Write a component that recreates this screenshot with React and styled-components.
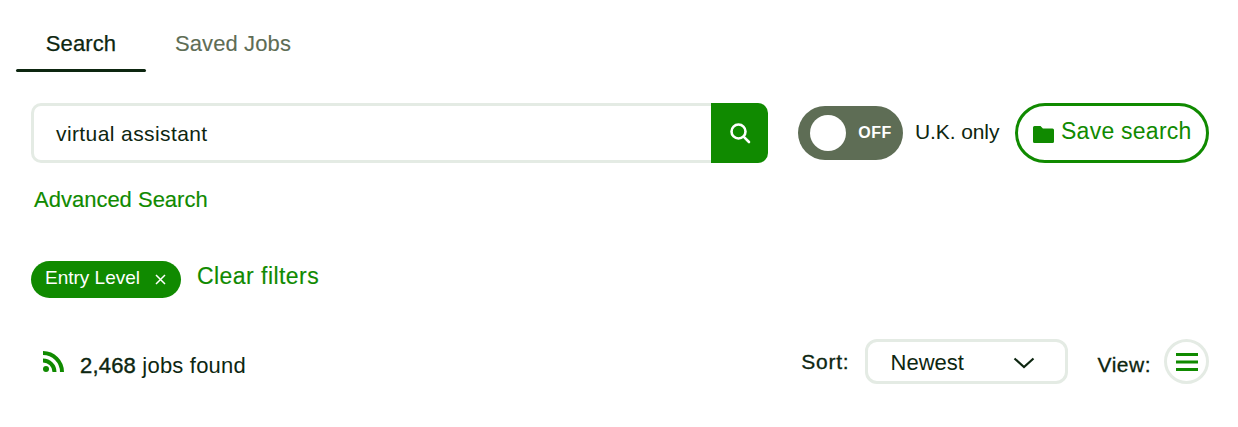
import React from 'react'
import styled, { createGlobalStyle } from 'styled-components'

const GREEN = '#108a00'
const DARK = '#0d2610'
const GREY = '#5e6d55'
const LINE = '#e4ebe4'

const Global = createGlobalStyle`
  html, body { margin: 0; padding: 0; background: #fff; }
  body { font-family: 'Liberation Sans', Arial, sans-serif; color: ${DARK}; }
  * { box-sizing: border-box; }
`

const Page = styled.div`
  width: 1238px;
  height: 427px;
  padding: 16px 29px 0 16px;
  overflow: hidden;
`

const Tabs = styled.div`
  display: flex;
  height: 56px;
`

const Tab = styled.div`
  position: relative;
  width: ${({ wide }) => (wide ? '174px' : '130px')};
  display: flex;
  justify-content: center;
  padding-top: 16px;
  font-size: 22px;
  line-height: 24px;
  letter-spacing: 0.1px;
  color: ${({ active }) => (active ? DARK : GREY)};
  -webkit-text-stroke: ${({ active }) => (active ? '0.25px' : '0.1px')};

  &::after {
    content: '';
    display: ${({ active }) => (active ? 'block' : 'none')};
    position: absolute;
    left: 0;
    right: 0;
    bottom: 0;
    height: 3px;
    border-radius: 2px;
    background: ${DARK};
  }
`

const SearchRow = styled.div`
  display: flex;
  align-items: flex-start;
  margin: 31px 0 0 15px;

  > * {
    flex: none;
    white-space: nowrap;
  }
`

const SearchBox = styled.div`
  display: flex;
  width: 737px;
  height: 60px;
`

const Field = styled.div`
  flex: 1;
  display: flex;
  align-items: center;
  padding: 1px 0 0 22px;
  border: 3px solid ${LINE};
  border-right: 0;
  border-radius: 10px 0 0 10px;
  font-size: 21px;
  letter-spacing: 0.4px;
`

const SearchButton = styled.div`
  width: 57px;
  display: flex;
  align-items: center;
  justify-content: center;
  background: ${GREEN};
  border-radius: 0 10px 10px 0;
`

const Toggle = styled.div`
  width: 105px;
  height: 54px;
  margin: 3px 0 0 30px;
  padding: 0 11px 0 12px;
  display: flex;
  align-items: center;
  justify-content: space-between;
  background: ${GREY};
  border-radius: 27px;
`

const Knob = styled.span`
  width: 36px;
  height: 36px;
  border-radius: 50%;
  background: #fff;
`

const ToggleText = styled.span`
  color: #fff;
  font-size: 16px;
  font-weight: 700;
  letter-spacing: 0.6px;
`

const ToggleLabel = styled.span`
  margin: 15px 0 0 12px;
  font-size: 21px;
  line-height: 28px;
  letter-spacing: -0.1px;
`

const SaveButton = styled.div`
  width: 194px;
  height: 60px;
  margin-left: 16px;
  padding-bottom: 3px;
  display: flex;
  align-items: center;
  justify-content: center;
  gap: 7px;
  border: 3px solid ${GREEN};
  border-radius: 30px;
  color: ${GREEN};
  font-size: 23px;
  letter-spacing: 0.25px;

  svg {
    margin-top: 5px;
  }
`

const Link = styled.a`
  color: ${GREEN};
  font-size: ${({ size }) => size}px;
  line-height: 26px;
  letter-spacing: ${({ spacing }) => spacing}px;
  -webkit-text-stroke: 0.15px;
`

const AdvancedRow = styled.div`
  margin: 24px 0 0 18px;
`

const FilterRow = styled.div`
  display: flex;
  align-items: flex-start;
  gap: 16px;
  margin: 48px 0 0 15px;
`

const ClearSlot = styled.div`
  margin-top: 2px;
`

const Chip = styled.div`
  width: 150px;
  height: 37px;
  padding: 0 15px 3px 14px;
  display: flex;
  align-items: center;
  justify-content: space-between;
  background: ${GREEN};
  border-radius: 19px;
  color: #fff;
  font-size: 19px;

  svg {
    margin-top: 3px;
  }
`

const ResultRow = styled.div`
  display: flex;
  align-items: center;
  justify-content: space-between;
  margin: 41px 0 0 27px;
  height: 45px;
`

const Found = styled.div`
  display: flex;
  align-items: center;
  gap: 16px;
  font-size: 22px;
  letter-spacing: 0.2px;
`

const FoundText = styled.span`
  padding-top: 9px;
`

const Count = styled.span`
  -webkit-text-stroke: 0.4px;
`

const Controls = styled.div`
  display: flex;
  align-items: center;
`

const ControlLabel = styled.span`
  font-size: 21px;
  letter-spacing: ${({ spacing }) => spacing}px;
  margin-right: ${({ gap }) => gap}px;
  padding-top: ${({ drop }) => drop || 0}px;
  -webkit-text-stroke: 0.3px;
`

const Select = styled.div`
  width: 203px;
  height: 45px;
  margin-right: 30px;
  padding: 2px 30px 0 23px;
  display: flex;
  align-items: center;
  justify-content: space-between;
  border: 3px solid ${LINE};
  border-radius: 12px;
  font-size: 22px;
`

const ViewButton = styled.div`
  width: 45px;
  height: 45px;
  display: flex;
  align-items: center;
  justify-content: center;
  border: 3px solid ${LINE};
  border-radius: 50%;
`

export default function App() {
  return (
    <Page>
      <Global />
      <Tabs>
        <Tab active>Search</Tab>
        <Tab wide>Saved Jobs</Tab>
      </Tabs>
      <SearchRow>
        <SearchBox>
          <Field>virtual assistant</Field>
          <SearchButton>
            <svg width="22" height="22" viewBox="0 0 22 22" fill="none" stroke="#fff" strokeWidth="2.6" strokeLinecap="round">
              <circle cx="9.5" cy="9.5" r="7" />
              <path d="M14.8 14.8 20 20" />
            </svg>
          </SearchButton>
        </SearchBox>
        <Toggle>
          <Knob />
          <ToggleText>OFF</ToggleText>
        </Toggle>
        <ToggleLabel>U.K. only</ToggleLabel>
        <SaveButton>
          <svg width="21" height="17" viewBox="0 0 21 17" fill={GREEN}>
            <path d="M1.5 0h6l2.4 2.4H19.5A1.5 1.5 0 0 1 21 3.9v11.6a1.5 1.5 0 0 1-1.5 1.5h-18A1.5 1.5 0 0 1 0 15.5v-14A1.5 1.5 0 0 1 1.5 0z" />
          </svg>
          Save search
        </SaveButton>
      </SearchRow>
      <AdvancedRow>
        <Link size={22} spacing={0}>Advanced Search</Link>
      </AdvancedRow>
      <FilterRow>
        <Chip>
          Entry Level
          <svg width="11" height="11" viewBox="0 0 11 11" stroke="#fff" strokeWidth="1.5">
            <path d="M1 1l9 9M10 1l-9 9" />
          </svg>
        </Chip>
        <ClearSlot>
          <Link size={23} spacing={0.45}>Clear filters</Link>
        </ClearSlot>
      </FilterRow>
      <ResultRow>
        <Found>
          <svg width="21" height="21" viewBox="0 0 21 21" fill="none" stroke={GREEN} strokeWidth="4">
            <path d="M0 2C10.5 2 19 10.5 19 21" />
            <path d="M0 9.5C6.4 9.5 11.5 14.6 11.5 21" />
            <circle cx="3" cy="18" r="3" fill={GREEN} stroke="none" />
          </svg>
          <FoundText>
            <Count>2,468</Count> jobs found
          </FoundText>
        </Found>
        <Controls>
          <ControlLabel gap={15} spacing={0.8}>Sort:</ControlLabel>
          <Select>
            Newest
            <svg width="22" height="12" viewBox="0 0 22 12" fill="none" stroke={DARK} strokeWidth="2.2">
              <path d="M1.5 1.5 11 10l9.5-8.5" />
            </svg>
          </Select>
          <ControlLabel gap={13} spacing={0.5} drop={7}>View:</ControlLabel>
          <ViewButton>
            <svg width="22" height="18" viewBox="0 0 22 18" fill={GREEN}>
              <rect width="22" height="3" />
              <rect y="7.5" width="22" height="3" />
              <rect y="15" width="22" height="3" />
            </svg>
          </ViewButton>
        </Controls>
      </ResultRow>
    </Page>
  )
}
